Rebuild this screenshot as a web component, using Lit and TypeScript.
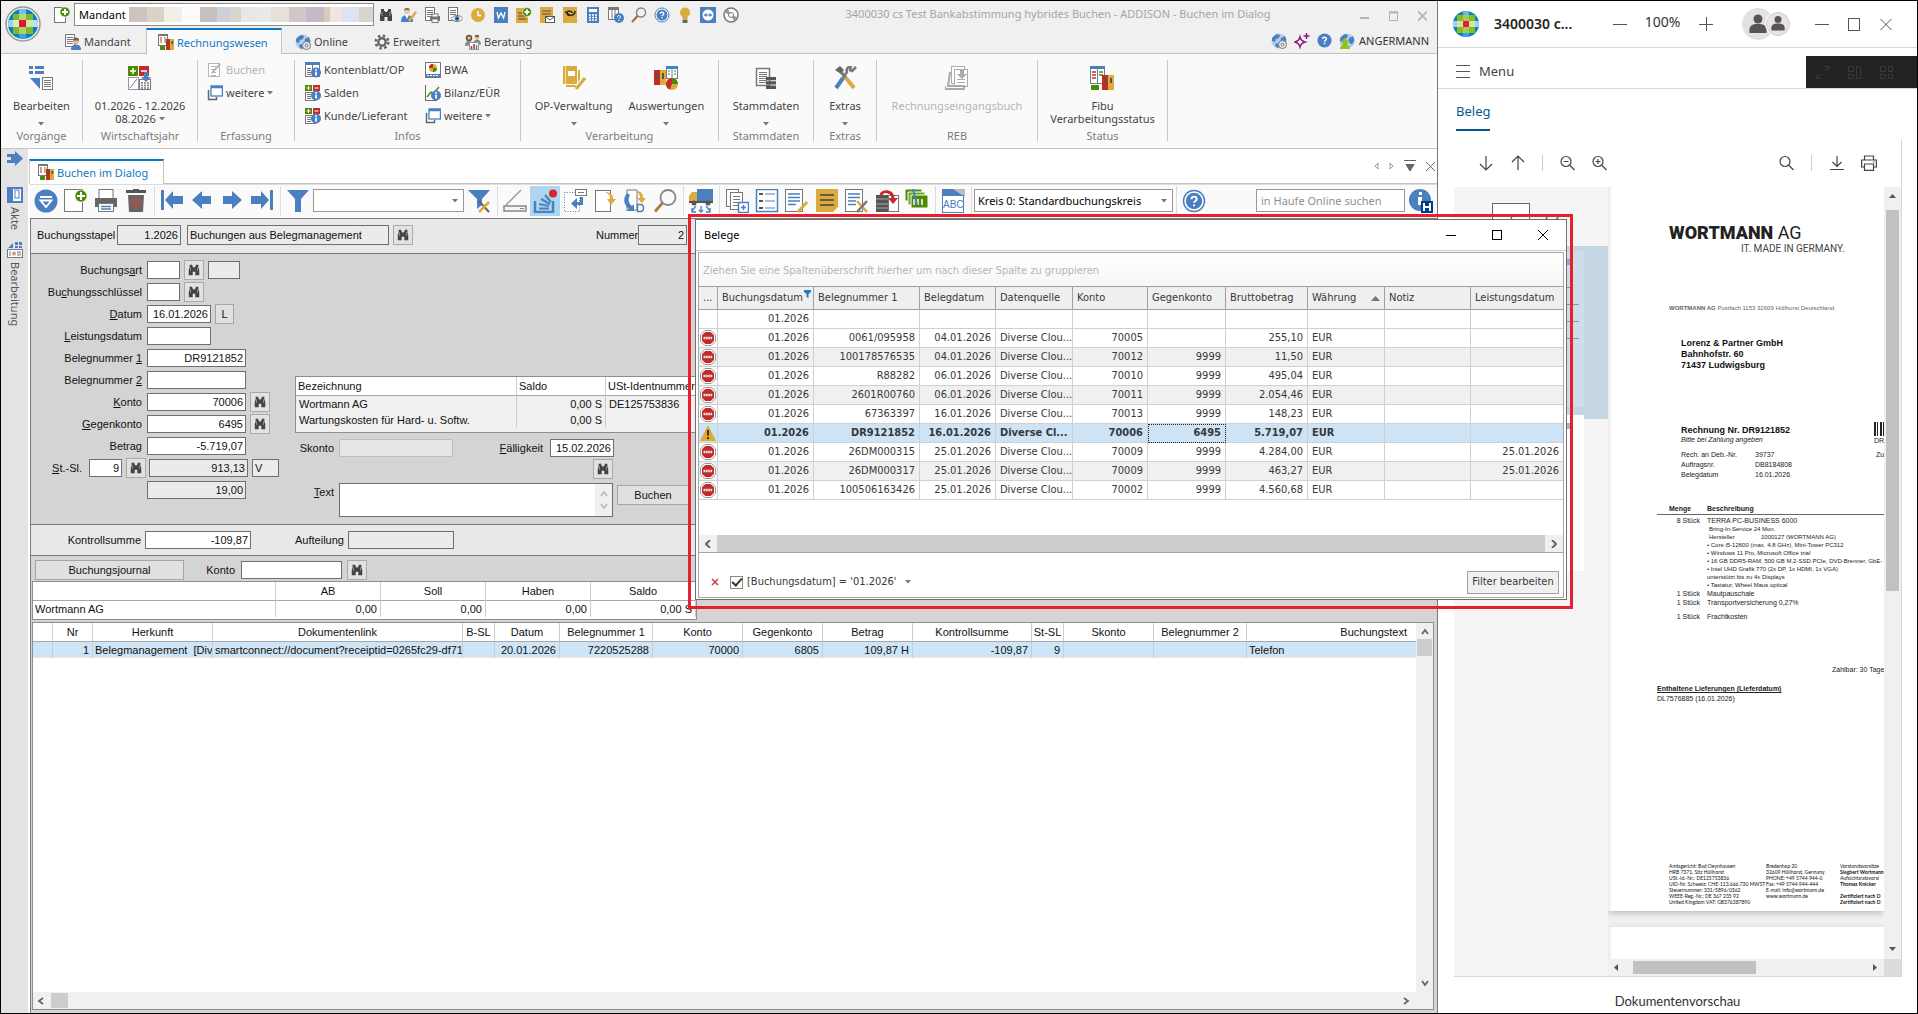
import { LitElement, html, svg, css, nothing, TemplateResult } from "lit";
import { customElement, property } from "lit/decorators.js";
import { classMap } from "lit/directives/class-map.js";

/* ---------- icons ---------- */

const G = "#777";
const B = "#4a80c0";
const Y = "#dcab3e";
const R = "#c22b28";
const N = "#4c8a05";

const tick = (x: number, y: number, w: number, c = G) => svg`<rect x=${x} y=${y} width=${w} height="1" fill=${c} />`;
const lines = (x: number, y: number, w: number, n: number, step = 2, c = G) =>
  Array.from({ length: n }, (_, i) => tick(x, y + i * step, w, c));
const page = (x = 2.5, y = 0.5, w = 11, h = 15) =>
  svg`<rect x=${x} y=${y} width=${w} height=${h} fill="#fff" stroke=${G} />`;
const plusBadge = (cx: number, cy: number, r = 4.5) => svg`
  <circle cx=${cx} cy=${cy} r=${r} fill=${N} stroke="#fff" stroke-width="0.6" />
  <path d="M${cx - r + 2} ${cy}h${2 * r - 4}M${cx} ${cy - r + 2}v${2 * r - 4}" stroke="#fff" stroke-width="2" />`;
const infoBadge = svg`
  <circle cx="11" cy="10.5" r="5" fill=${B} />
  <rect x="10.2" y="7" width="1.7" height="1.7" fill="#fff" /><rect x="10.2" y="9.6" width="1.7" height="4" fill="#fff" />`;
const globe = svg`
  <circle cx="8" cy="8" r="7.5" fill="#b4cdec" />
  <path d="M3 3l3-2 3 1-1 3-3 1-1 3-3-1 0-3zM10 5l4-2 1.500 4-2 4-2 0-2-3zM5 10l3 1 0 3-2 1-2-3z" fill="#4a80c0" />`;
const ledger = svg`
  <rect x="0.500" y="0.500" width="9" height="11" fill="#fff" stroke=${G} />
  <path d="M0 1h10" stroke=${G} stroke-width="2" />
  <path d="M2 4h2M2 6h2M2 8h2" stroke=${R} /><path d="M6 4h2M6 6h2M6 8h2" stroke=${N} />
  <rect x="8" y="5" width="4" height="11" fill=${R} /><rect x="12" y="5" width="4" height="11" fill=${Y} />
  <path d="M9.500 7h1.500v3h-1.500zM13.500 7h1.500v3h-1.500z" fill="#553" />
  <rect x="2" y="12" width="5" height="4" fill=${N} />`;
const grid4 = svg`
  <rect x="0" y="0" width="7" height="6" fill=${N} /><rect x="8" y="0" width="7" height="6" fill=${R} />
  <path d="M1.500 3h4M3.500 1v4M9.500 3h4" stroke="#fff" />`;

const ICONS: Record<string, { vb: number; body: unknown }> = {
  logo: {
    vb: 36,
    body: svg`
      <defs><clipPath id="lc"><circle cx="18" cy="18" r="15" /></clipPath></defs>
      <circle cx="18" cy="18" r="17" fill="#eee" stroke="#999" stroke-width="1.500" />
      <g clip-path="url(#lc)">
        <rect width="36" height="36" fill="#0a7fc6" />
        <rect x="8" y="8" width="20" height="20" fill="#7db928" />
        <rect x="14" y="2" width="7" height="6" fill="#7cc0ea" /><rect x="14" y="28" width="7" height="6" fill="#3d9fdb" />
        <rect x="2" y="14" width="6" height="7" fill="#9ed0ee" /><rect x="28" y="14" width="6" height="7" fill="#bfe0f4" />
        <rect x="14" y="8" width="7" height="6" fill="#b4d97a" /><rect x="14" y="21" width="7" height="7" fill="#a8d367" />
        <rect x="8" y="14" width="6" height="7" fill="#d9edbb" /><rect x="21" y="14" width="7" height="7" fill="#d0e8ab" />
        <rect x="14" y="14" width="7" height="7" fill="#e3152b" />
      </g>`,
  },
  logoFlat: {
    vb: 26,
    body: svg`
      <defs><clipPath id="lf"><circle cx="13" cy="13" r="13" /></clipPath></defs>
      <g clip-path="url(#lf)">
        <rect width="26" height="26" fill="#0a7fc6" />
        <rect x="4" y="4" width="18" height="18" fill="#85bc20" />
        <rect x="10" y="0" width="6" height="4" fill="#6ab6e4" /><rect x="10" y="22" width="6" height="4" fill="#3d9fdb" />
        <rect x="0" y="10" width="4" height="6" fill="#a5d3ef" /><rect x="22" y="10" width="4" height="6" fill="#a5d3ef" />
        <rect x="10" y="4" width="6" height="6" fill="#a3cc55" /><rect x="10" y="16" width="6" height="6" fill="#a3cc55" />
        <rect x="4" y="10" width="6" height="6" fill="#cfe6a5" /><rect x="16" y="10" width="6" height="6" fill="#cfe6a5" />
        <rect x="10" y="10" width="6" height="6" fill="#e5202e" />
      </g>`,
  },
  newDoc: { vb: 16, body: svg`${page(0.5, 0.5, 11, 15)}${plusBadge(11, 5, 5)}` },
  bino: {
    vb: 16,
    body: svg`<path d="M3 2h3v2h1v1h2V4h1V2h3v3l1 3v6H9.500v-4h-3v4H2V8l1-3z" fill="#444" /><path d="M4 5v4M12 5v4" stroke="#999" />`,
  },
  personPencil: {
    vb: 16,
    body: svg`<circle cx="6" cy="4" r="3" fill="#e8c9a0" /><path d="M3 4a3 3 0 0 1 6 0l-1-1H4z" fill="#86664a" /><path d="M0 15c0-5 2-7 6-7s6 2 6 7z" fill=${B} /><path d="M4 8l2 4 2-4z" fill="#fff" /><path d="M8 14l7-9" stroke=${Y} stroke-width="2.500" />`,
  },
  docPrint: {
    vb: 16,
    body: svg`${page(1.5, 0.5, 9, 13)}${lines(3, 3, 6, 4)}<rect x="6" y="9" width="10" height="5" fill=${G} /><rect x="8" y="7" width="6" height="3" fill="#fff" stroke=${G} /><rect x="8" y="12" width="6" height="3.500" fill="#fff" stroke=${G} />`,
  },
  docEye: {
    vb: 16,
    body: svg`${page(1.5, 0.5, 9, 13)}${lines(3, 3, 6, 3)}<path d="M4 11.500c3-4 9-4 12 0-3 4-9 4-12 0z" fill="#fff" stroke=${G} /><circle cx="10" cy="11.500" r="2.500" fill=${B} /><circle cx="10" cy="11.500" r="1" fill="#222" />`,
  },
  clock: { vb: 16, body: svg`<circle cx="8" cy="8" r="7" fill=${Y} /><path d="M8 4v4.500h3" fill="none" stroke="#fff" stroke-width="1.500" />` },
  word: { vb: 16, body: svg`<rect x="1" y="0" width="14" height="16" fill=${B} /><path d="M4 5l1.500 6L8 6l2.500 5L12 5" fill="none" stroke="#fff" stroke-width="1.300" />` },
  noteAdd: { vb: 16, body: svg`<path d="M0 1h12v15H0z" fill=${Y} /><path d="M2 6h5M2 9h8M2 12h8" stroke="#444" />${plusBadge(11, 5, 4.5)}` },
  noteMail: { vb: 16, body: svg`<path d="M1 0h13v16H1z" fill=${Y} /><path d="M3 4h9M3 7h9" stroke="#555" /><rect x="6.500" y="9.500" width="9" height="6" fill="#fff" stroke="#555" /><path d="M7 10l4 3 4-3" fill="none" stroke="#555" />` },
  post: { vb: 16, body: svg`<rect x="1" y="0" width="14" height="16" fill=${Y} /><path d="M3 5c2 0 3 3 5 3M13 4c0 5-8 6-8 2 0-3 5-2 5 0" fill="none" stroke="#222" stroke-width="1.500" />` },
  calc: { vb: 16, body: svg`<rect x="2" y="0" width="12" height="16" fill=${B} /><rect x="4" y="2" width="8" height="3" fill="#fff" /><path d="M4 8h8M4 10.500h8M4 13h8" stroke="#fff" stroke-width="1.500" stroke-dasharray="2 1" />` },
  tableHelp: { vb: 16, body: svg`<rect x="0.500" y="0.500" width="10" height="12" fill="#fff" stroke=${G} /><path d="M0 2h11" stroke=${G} stroke-width="2" /><path d="M4 1v12M7 1v12" stroke=${G} /><circle cx="11" cy="11" r="5" fill=${B} /><path d="M9.500 10c0-2 3-2 3 0 0 1-1.500 1-1.500 2.200M11 13v1" fill="none" stroke="#fff" />` },
  lens: { vb: 16, body: svg`<circle cx="10" cy="5.500" r="4.500" fill="#f4f4f4" stroke="#888" stroke-width="1.500" /><path d="M6.500 9L1 15" stroke="#a06a3c" stroke-width="2" />` },
  help: { vb: 16, body: svg`<circle cx="8" cy="8" r="7" fill="#fff" stroke=${B} /><circle cx="8" cy="8" r="5.500" fill=${B} /><path d="M6.300 6.800c0-2.300 3.500-2.300 3.500 0 0 1.200-1.700 1.200-1.700 2.400M8 10.300v1.200" fill="none" stroke="#fff" stroke-width="1.300" />` },
  helpSolid: { vb: 16, body: svg`<circle cx="8" cy="8" r="7.500" fill=${B} /><path d="M6 6.500c0-2.600 4-2.600 4 0 0 1.400-2 1.400-2 2.800M8 10.500V12" fill="none" stroke="#fff" stroke-width="1.500" />` },
  bulb: { vb: 16, body: svg`<circle cx="8" cy="5.500" r="5" fill=${Y} /><rect x="5.500" y="9" width="5" height="3" fill=${Y} /><rect x="5.500" y="12.500" width="5" height="3.500" fill="#666" />` },
  remote: { vb: 16, body: svg`<rect width="16" height="16" fill=${B} /><circle cx="8" cy="8" r="5.500" fill="#fff" /><path d="M3.500 8l3-2v1.500h3V6l3 2-3 2V8.500h-3V10z" fill=${B} />` },
  disc: { vb: 16, body: svg`<circle cx="8" cy="8" r="7" fill="#fff" stroke=${G} stroke-width="1.500" /><path d="M8 8L2 6a6 6 0 0 1 3-4zM8 8l6 2a6 6 0 0 1-3 4z" fill="#999" /><circle cx="8" cy="8" r="2.500" fill="#fff" stroke=${G} />` },
  docPerson: { vb: 16, body: svg`${page(0.5, 0.5, 9, 12)}${lines(2, 3, 6, 4)}<circle cx="11" cy="7" r="3" fill="#dcb98c" /><path d="M8 6.500a3 3 0 0 1 6 0z" fill="#7a6048" /><path d="M6 16c0-4 2-5.500 5-5.500s5 1.500 5 5.500z" fill=${B} />` },
  ledger: { vb: 16, body: ledger },
  globeAt: { vb: 16, body: svg`${globe}<circle cx="11.500" cy="11.500" r="4" fill="#eee" stroke="#777" /><circle cx="11.500" cy="11.500" r="1.500" fill="none" stroke="#777" />` },
  globeUser: { vb: 16, body: svg`${globe}<circle cx="6" cy="9" r="3" fill="#8fc31f" /><path d="M1 16c0-3 2-4.500 5-4.500s5 1.500 5 4.500z" fill="#8fc31f" />` },
  gear: { vb: 16, body: svg`<circle cx="8" cy="8" r="6.300" fill="none" stroke="#666" stroke-width="2.600" stroke-dasharray="2.500 2.450" /><circle cx="8" cy="8" r="3.700" fill="none" stroke="#666" stroke-width="2.400" />` },
  advice: { vb: 16, body: svg`<circle cx="4" cy="4" r="2.500" fill="#dcb98c" stroke="#6b5140" stroke-width="1.500" /><circle cx="12" cy="3" r="2.300" fill="#dcb98c" /><path d="M9.700 3a2.300 2.300 0 0 1 4.600 0z" fill="#7a6048" /><path d="M0 12c0-4 2-5 4-5s3 1 4 2c1-2 2-3.500 4-3.500s4 1.500 4 5z" fill="#888" /><rect x="4.500" y="8.500" width="9" height="7" fill="#fff" stroke="#999" /><path d="M6.500 15v-3M9 15v-5" stroke=${R} stroke-width="1.500" /><path d="M11.500 15v-4" stroke=${B} stroke-width="1.500" />` },
  spark: { vb: 16, body: svg`<path d="M6 4c.8 3 2 4.200 5 5-3 .8-4.200 2-5 5-.8-3-2-4.200-5-5 3-.8 4.200-2 5-5z" fill="none" stroke="#8a1a7a" stroke-width="1.500" /><path d="M12.500 0v6M9.500 3h6" stroke="#8a1a7a" stroke-width="1.500" />` },
  edit: { vb: 24, body: svg`<path d="M0 1.500h4M0 6.500h4M6 1.500h9M6 6.500h9" stroke=${B} stroke-width="3" /><path d="M1 12h10v11z" fill=${B} /><rect x="13.500" y="11.500" width="10" height="12" fill="#fff" stroke=${G} />${lines(15, 14, 7, 4)}` },
  fiscal: { vb: 24, body: svg`<rect x="0" y="0" width="10" height="10" fill=${N} /><rect x="11" y="0" width="10" height="10" fill=${R} /><path d="M2 5h6M5 2v6M13 5h6" stroke="#fff" stroke-width="1.500" /><rect x="0.500" y="11.500" width="10" height="12" fill="#fff" stroke="#999" /><path d="M2 22l7-9" stroke=${B} /><rect x="11.500" y="13.500" width="11" height="10" fill="#fff" stroke=${G} /><path d="M13 17h8M13 19.500h8M13 22h8" stroke=${G} stroke-width="1.500" stroke-dasharray="2 1" /><path d="M16 6h4v5h3l-5 5-5-5h3z" fill=${B} />` },
  writeOff: { vb: 16, body: svg`<rect x="1.500" y="1.500" width="11" height="13" fill="#fff" stroke="#b5b5b5" />${lines(4, 4, 5, 4, 3, "#b5b5b5")}<path d="M5 11l8-9" stroke="#b5b5b5" stroke-width="2" />` },
  windows: { vb: 16, body: svg`<path d="M1.500 5v9.500h8V12" fill="none" stroke="#666" stroke-width="1.500" /><rect x="4" y="1" width="11.400" height="10" fill="#fff" stroke=${B} stroke-width="1.300" /><path d="M4 2h12" stroke=${B} stroke-width="2.500" />` },
  acct: { vb: 16, body: svg`<rect x="0.500" y="0.500" width="14" height="14" fill="#fff" stroke=${G} /><path d="M0 1.500h15" stroke=${B} stroke-width="3" /><path d="M7.500 0v15" stroke=${G} />${lines(2, 6, 4, 4)}${infoBadge}` },
  saldo: { vb: 16, body: svg`${grid4}<rect x="0.500" y="7.500" width="10" height="8" fill="#fff" stroke=${G} />${lines(2, 9, 4, 3)}${infoBadge}` },
  bwa: { vb: 16, body: svg`<rect x="0.500" y="0.500" width="15" height="15" fill="#fff" stroke=${G} /><path d="M1 12h14v3H1z" fill=${B} /><path d="M2 13.500h12" stroke="#fff" stroke-dasharray="2 1" /><circle cx="8" cy="6" r="4" fill=${Y} /><path d="M8 6V2a4 4 0 0 0-4 4z" fill=${R} /><path d="M8 6h4a4 4 0 0 1-4 4z" fill=${N} />` },
  bilanz: { vb: 16, body: svg`<path d="M0.500 0v15.500H12" fill="none" stroke="#666" /><path d="M2 12l4-5 2 2 6-7" fill="none" stroke=${N} stroke-width="1.500" />${infoBadge}` },
  op: { vb: 24, body: svg`<path d="M1 0h14v18H1z" fill=${Y} /><path d="M3.500 0v18" stroke="#f4dc9c" /><path d="M4 20h13V4" fill="none" stroke=${Y} stroke-width="2" /><rect x="6" y="5" width="7" height="5" fill="#fff" /><path d="M15 21l8-9" stroke="#fafafa" stroke-width="5" /><path d="M14 23l9-11" stroke=${Y} stroke-width="3" />` },
  reports: { vb: 24, body: svg`<rect x="0" y="4" width="6" height="15" fill=${R} /><rect x="6" y="4" width="6" height="15" fill=${Y} /><path d="M2 7h2v6H2zM8 7h2v6H8z" fill="#554" /><rect x="12.500" y="0.500" width="11" height="12" fill="#fff" stroke=${G} /><path d="M12 1.500h12" stroke=${B} stroke-width="3" /><path d="M18 0v12" stroke=${B} /><path d="M14 5h2M14 8h2M20 5h2M20 8h2" stroke=${N} /><circle cx="18" cy="18" r="6" fill=${Y} /><path d="M18 18v-6a6 6 0 0 1 6 6z" fill=${N} /><path d="M18 18h-6a6 6 0 0 0 4 5.600z" fill=${R} /><path d="M18 18v-6a6 6 0 0 0-6 6z" fill=${R} />` },
  master: { vb: 24, body: svg`<rect x="2.500" y="2.500" width="13" height="17" fill="#fff" stroke=${G} stroke-width="1.500" />${lines(5, 6, 8, 6)}<path d="M12 11h10v3.300H12zM12 15.300h10v3.300H12zM12 19.600h10V23H12z" fill="#555" />` },
  tools: { vb: 24, body: svg`<path d="M2 4l5-4 4 4-3 4z" fill="#666" /><path d="M8 6l5 6" stroke="#777" stroke-width="3" /><path d="M13 12l8 10" stroke=${Y} stroke-width="4" /><path d="M23 1l-4 4-2-1 1-4c-4 1-5 4-4 6l-4 6" fill="none" stroke="#777" stroke-width="2.500" /><path d="M10 12L3 22" stroke=${B} stroke-width="4" />` },
  inbox: { vb: 24, body: svg`<rect x="6.500" y="0.500" width="13" height="17" fill="#fff" stroke="#aaa" /><rect x="9.500" y="3.500" width="13" height="17" fill="#fff" stroke="#aaa" />${lines(12, 13, 8, 3, 3, "#aaa")}<path d="M15 3h4v5h3l-5 5-5-5h3z" fill="#aaa" /><path d="M5 6L3 20h16v3H0v-3" fill="none" stroke="#aaa" stroke-width="2" />` },
  status: { vb: 24, body: svg`<rect x="0.500" y="0.500" width="14" height="17" fill="#fff" stroke=${G} /><path d="M0 1.500h15" stroke=${B} stroke-width="3" /><path d="M7.500 0v17" stroke=${B} /><path d="M2 6h4M2 9h4M2 12h4" stroke=${R} stroke-width="1.500" /><path d="M9 6h4M9 9h4" stroke=${N} stroke-width="1.500" /><rect x="12" y="9" width="6" height="15" fill=${R} /><rect x="18" y="9" width="6" height="15" fill=${Y} /><path d="M14 12h2v5h-2zM20 12h2v5h-2z" fill="#554" /><rect x="1" y="19" width="8" height="5" fill=${N} />` },
  collapse: { vb: 24, body: svg`<circle cx="12" cy="12" r="11.500" fill=${B} /><path d="M6 8h12" stroke="#fff" stroke-width="2" /><path d="M6.500 11.500h11L12 18z" fill=${B} stroke="#fff" stroke-width="1.800" />` },
  newDocL: { vb: 24, body: svg`<rect x="0.500" y="0.500" width="18" height="22" fill="#fff" stroke=${G} />${plusBadge(17, 7, 6)}` },
  printL: { vb: 24, body: svg`<rect x="5" y="0.500" width="14" height="9" fill="#fff" stroke=${G} /><rect x="1" y="9" width="22" height="9" fill="#666" /><rect x="4.500" y="14.500" width="15" height="8" fill="#fff" stroke=${G} /><path d="M7 17.500h10M7 20h10" stroke=${B} stroke-width="1.500" />` },
  trash: { vb: 24, body: svg`<path d="M2 2.500h20M9 1h6" stroke="#555" stroke-width="3" /><path d="M4 6h16l-1 17H5z" fill="#666" /><path d="M8.500 9v10M12 9v10M15.500 9v10" stroke="#c54a40" stroke-width="1.500" />` },
  first: { vb: 24, body: svg`<path d="M2.500 1v20" stroke=${B} stroke-width="3" /><path d="M5 11l8-9v5h10v8H13v5z" fill=${B} />` },
  prev: { vb: 24, body: svg`<path d="M2 11l10-9v5h9v8h-9v5z" fill=${B} />` },
  next: { vb: 24, body: svg`<path d="M22 11L12 2v5H3v8h9v5z" fill=${B} />` },
  last: { vb: 24, body: svg`<path d="M21.500 1v20" stroke=${B} stroke-width="3" /><path d="M19 11l-8-9v5H1v8h10v5z" fill=${B} />` },
  funnel: { vb: 24, body: svg`<path d="M1 1h22l-8 9v13H9V10z" fill=${B} />` },
  funnelTools: { vb: 24, body: svg`<path d="M1 1h22l-8 9v6l-5 4V10z" fill=${B} /><path d="M12 12l10 11" stroke="#666" stroke-width="2" /><path d="M22 13L12 23" stroke=${Y} stroke-width="2.500" />` },
  scanner: { vb: 24, body: svg`<path d="M18 1L3 16" stroke="#999" stroke-width="1.500" /><path d="M1 17h22v5H1z" fill="#f5f5f5" stroke="#888" stroke-width="1.500" /><path d="M17 19.500h4" stroke="#888" />` },
  stack: { vb: 24, body: svg`<path d="M2 12v11h18V12" fill="none" stroke=${B} stroke-width="2.500" /><path d="M6 19.500h10M6 15l10 2M8 10l9 5M12 6l6 7" stroke=${B} stroke-width="2.200" /><circle cx="20" cy="4.500" r="4" fill="#d8232a" />` },
  attach: { vb: 24, body: svg`<rect x="1.500" y="3.500" width="15" height="19" fill="#fff" stroke=${B} stroke-dasharray="1 1.500" /><rect x="12.500" y="0.500" width="11" height="6" fill="#fff" stroke=${G} />${tick(15, 3, 6)}<path d="M20 8v8h-6v4l-6-5.500 6-5.500v4h3V8z" fill=${B} />` },
  pageArrow: { vb: 24, body: svg`<rect x="2.500" y="1.500" width="15" height="21" fill="#fff" stroke=${G} /><path d="M12 3c5 0 8 2 8 7h3l-5 6-4-6h3c0-4-1-5-5-7z" fill=${Y} />` },
  pageLoop: { vb: 24, body: svg`<path d="M4 1h10v20H4z" fill="#fff" stroke=${G} /><path d="M4 4c-4 5-4 11 2 16l-3 2h8v-7l-2 2c-4-3-4-7-2-11z" fill=${B} /><path d="M13 2c6 0 7 3 7 7h3l-4 5-5-5h3c0-3-1-5-4-7z" fill=${Y} /><path d="M14.500 15.500h3c4 0 4 7 0 7h-3z" fill="#fff" stroke=${B} stroke-width="1.500" />` },
  lensL: { vb: 24, body: svg`<circle cx="15" cy="8.500" r="7.500" fill="#fafafa" stroke="#888" stroke-width="1.800" /><path d="M9.500 14L2 22.500" stroke="#b07a44" stroke-width="2.800" />` },
  truck: { vb: 24, body: svg`<rect x="8" y="0" width="16" height="12" fill=${B} /><path d="M0 12V7l3-4h5v9z" fill=${Y} /><path d="M0 12h24v2H0z" fill="#555" /><circle cx="5" cy="14" r="2.500" fill="#555" /><circle cx="19" cy="14" r="2.500" fill="#555" /><path d="M7 17l-4 5M3 19v4h4M12 17v6M10 21l2 2 2-2M17 17l4 5M21 19v4h-4" fill="none" stroke=${B} stroke-width="1.300" />` },
  copyAdd: { vb: 24, body: svg`<rect x="1.500" y="0.500" width="12" height="17" fill="#fff" stroke=${G} /><rect x="5.500" y="3.500" width="12" height="17" fill="#fff" stroke=${G} />${lines(8, 7, 7, 4, 3)}<rect x="13.500" y="13.500" width="10" height="10" fill="#fff" stroke=${B} stroke-width="1.500" /><path d="M16 18.500h5M18.500 16v5" stroke=${B} stroke-width="1.500" />` },
  checklist: { vb: 24, body: svg`<rect x="1.500" y="0.500" width="21" height="22" fill="#fff" stroke=${B} stroke-width="1.500" /><path d="M4 5h4M4 12h4M4 19h4" stroke="#555" stroke-width="2" /><path d="M10 5h10M10 12h10M10 19h10" stroke=${B} />` },
  listPen: { vb: 24, body: svg`<rect x="0.500" y="0.500" width="17" height="22" fill="#fff" stroke=${G} /><path d="M3 5h12M3 8.500h12M3 12h12M3 15.500h8" stroke=${B} stroke-width="1.500" /><path d="M13 23l9-10" stroke=${Y} stroke-width="3" />` },
  note: { vb: 24, body: svg`<path d="M1 0h22v18l-5 5H1z" fill=${Y} /><path d="M5 6h14M5 11h14M5 16h14" stroke="#444" stroke-width="1.500" />` },
  listTools: { vb: 24, body: svg`<rect x="0.500" y="0.500" width="17" height="22" fill="#fff" stroke=${G} /><path d="M3 5h12M3 8.500h12M3 12h8M3 15.500h8" stroke=${B} stroke-width="1.500" /><path d="M12 12l10 11" stroke=${Y} stroke-width="2.500" /><path d="M22 12L12 23" stroke="#777" stroke-width="2.500" />` },
  drumCopy: { vb: 24, body: svg`<path d="M1 6h13v17H1z" fill="#555" /><path d="M1 10h13M1 15h13M1 19h13" stroke="#aaa" /><rect x="13.500" y="6.500" width="10" height="16" fill="#fff" stroke=${G} /><path d="M6 6c1-5 12-5 12 4" fill="none" stroke=${R} stroke-width="3" /><path d="M13 9h10l-5 6z" fill=${R} />` },
  cards: { vb: 24, body: svg`<path d="M0 0h17v12H0z" fill=${N} stroke="#fff" /><path d="M3 3h17v13H3z" fill="#6aa52a" stroke="#fff" /><path d="M6 6h17v13H6z" fill=${N} stroke="#fff" /><path d="M9 10v6M13 10v6M17 10v6" stroke="#fff" stroke-width="1.500" /><path d="M8 0l4 16" stroke=${B} stroke-width="2" />` },
  abc: { vb: 24, body: svg`<path d="M1 0h14l8 7H1z" fill=${B} /><path d="M12 0l12 0v8z" fill="#bbb" /><rect x="1.500" y="6.500" width="21" height="17" fill="#fff" stroke=${B} /><text x="2" y="19" font-size="10" font-family="Liberation Sans" fill=${B}>ABC</text>` },
  haufe: { vb: 24, body: svg`<circle cx="11" cy="11" r="11" fill=${B} /><path d="M10 3h3v3h-3zM9 8h4v8H9z" fill="#fff" /><rect x="12" y="12" width="12" height="12" fill="#003f87" /><path d="M15 14v8M21 14v8M15 18h6" stroke="#fff" stroke-width="2" />` },
  enter: { vb: 16, body: svg`<path d="M0 3h8V0l8 7.500L8 15v-3H0V9h4V6H0z" fill=${B} />` },
  book: { vb: 16, body: svg`<path d="M1 1h14v14H1z" fill="#fff" stroke=${B} stroke-width="2" /><path d="M1 0h5v16H1z" fill=${B} /><rect x="8" y="3" width="4" height="8" fill="#fff" stroke=${B} />` },
  worksheet: { vb: 16, body: svg`<path d="M8 0h3v3H8zM12 0h3v3h-3zM8 4h3v2H8zM12 4h3v2h-3zM1 6l5-5v5z" fill=${B} /><rect x="0.500" y="7.500" width="15" height="8" fill="#fff" stroke=${G} /><path d="M3 9v5" stroke=${B} /><circle cx="7" cy="11.500" r="2" fill="#c98" /><path d="M11 9v5M13 9v5" stroke=${G} />` },
  stop: { vb: 16, body: svg`<path d="M4.800 0.500h6.400l4.300 4.300v6.400l-4.300 4.300H4.800L.5 11.200V4.800z" fill="#fff" stroke="#999" /><path d="M5.300 2h5.400L14 5.300v5.400L10.700 14H5.300L2 10.700V5.300z" fill="#bf2b2b" /><path d="M3.500 8h9" stroke="#f6dede" stroke-width="2.500" stroke-dasharray="1.800 0.500" />` },
  warn: { vb: 16, body: svg`<path d="M8 0l8 16H0z" fill="#dfa92f" /><path d="M8 5v5.500M8 12v2" stroke="#333" stroke-width="2" />` },
};

const icon = (name: string, size?: number) => {
  const i = ICONS[name];
  return html`<svg class="ic" aria-hidden="true" width=${size ?? i.vb} height=${size ?? i.vb} viewBox="0 0 ${i.vb} ${i.vb}">${i.body}</svg>`;
};

/* ---------- shared styles ---------- */

const base = css`
  * { box-sizing: border-box; }
  .ic { display: block; flex: none; }
  button { font: inherit; color: inherit; background: none; border: 0; padding: 0; margin: 0; }
  input, textarea, select { font: inherit; color: inherit; margin: 0; border-radius: 0; outline: 0; min-width: 0; }
  table { border-collapse: separate; border-spacing: 0; table-layout: fixed; width: 100%; }
  th, td { overflow: hidden; white-space: nowrap; font-weight: normal; }
  a { color: inherit; text-decoration: none; }
`;

/* ---------- receipts dialog ---------- */

type Receipt = { warn?: boolean; cells: string[] };

const RECEIPTS: Receipt[] = [
  { cells: ["01.2026", "0061/095958", "04.01.2026", "Diverse Clou...", "70005", "", "255,10", "EUR", "", ""] },
  { cells: ["01.2026", "100178576535", "04.01.2026", "Diverse Clou...", "70012", "9999", "11,50", "EUR", "", ""] },
  { cells: ["01.2026", "R88282", "06.01.2026", "Diverse Clou...", "70010", "9999", "495,04", "EUR", "", ""] },
  { cells: ["01.2026", "2601R00760", "06.01.2026", "Diverse Clou...", "70011", "9999", "2.054,46", "EUR", "", ""] },
  { cells: ["01.2026", "67363397", "16.01.2026", "Diverse Clou...", "70013", "9999", "148,23", "EUR", "", ""] },
  { warn: true, cells: ["01.2026", "DR9121852", "16.01.2026", "Diverse Cl...", "70006", "6495", "5.719,07", "EUR", "", ""] },
  { cells: ["01.2026", "26DM000315", "25.01.2026", "Diverse Clou...", "70009", "9999", "4.284,00", "EUR", "", "25.01.2026"] },
  { cells: ["01.2026", "26DM000317", "25.01.2026", "Diverse Clou...", "70009", "9999", "463,27", "EUR", "", "25.01.2026"] },
  { cells: ["01.2026", "100506163426", "25.01.2026", "Diverse Clou...", "70002", "9999", "4.560,68", "EUR", "", ""] },
];
const RECEIPT_COLS = ["Buchungsdatum", "Belegnummer 1", "Belegdatum", "Datenquelle", "Konto", "Gegenkonto", "Bruttobetrag", "Währung", "Notiz", "Leistungsdatum"];
const RECEIPT_WIDTHS = [19, 96, 106, 76, 77, 75, 78, 82, 77, 86, 93];
const LEFT_COLS = new Set([3, 7, 8]);

@customElement("receipts-dialog")
export class ReceiptsDialog extends LitElement {
  static styles = [
    base,
    css`
      :host { display: block; border: 3px solid #e8202e; padding: 2px 3px 6px 4px; font: 11px/14px "DejaVu Sans Condensed", "Liberation Sans", sans-serif; color: #383838; }
      .win { height: 100%; display: flex; flex-direction: column; background: #fff; border: 1px solid #6e6e6e; }
      .title { display: flex; align-items: center; height: 31px; padding-left: 8px; font: 11px/16px "Noto Sans", sans-serif; color: #000; border-bottom: 1px solid #c8c8c8; }
      .title span { flex: 1; }
      .wbtn { width: 46px; height: 30px; display: grid; place-items: center; }
      .panel { flex: 1; margin: 1px 2px; border: 1px solid #a6a6a6; display: flex; flex-direction: column; min-height: 0; }
      .group { height: 33px; padding: 11px 4px 0; color: #b5b5b5; background: linear-gradient(#fff, #f6f6f6); white-space: nowrap; line-height: 14px; }
      thead th { height: 24px; padding: 0 4px; text-align: left; background: #efefef; border-top: 1px solid #a0a0a0; border-bottom: 1px solid #a0a0a0; border-right: 1px solid #a0a0a0; }
      .hd { display: flex; align-items: center; justify-content: space-between; }
      .hd.filter { align-items: flex-start; }
      .hd.filter svg { margin: -1px -2px 0 0; }
      td { height: 19px; padding: 0 4px; border-right: 1px solid #d0d0d0; border-bottom: 1px solid #d0d0d0; text-align: right; line-height: 14px; }
      td.l { text-align: left; }
      td.st { padding: 0 1px; }
      th:last-child, td:last-child { border-right: 0; }
      tr.alt td { background: #f0f0f0; }
      tr.sel td { background: #cce4f6; font-weight: bold; }
      td.focus { outline: 1px dotted #222; outline-offset: -1px; }
      .space { flex: 1; }
      .hs { display: flex; height: 18px; background: #cdcdcd; border-bottom: 1px solid #a6a6a6; justify-content: space-between; flex: none; }
      .hs button { width: 18px; background: #f0f0f0; display: grid; place-items: center; }
      .foot { height: 44px; display: flex; align-items: center; padding: 14px 4px 0 12px; gap: 4px; flex: none; }
      .foot .x { width: 10px; height: 10px; margin-right: 5px; }
      .cb { display: flex; align-items: center; gap: 4px; flex: none; }
      .cb input { appearance: none; width: 13px; height: 13px; border: 1px solid #8a8a8a; background: #fff; display: grid; place-items: center; }
      .cb input:checked::after { content: ""; width: 8px; height: 4px; border-left: 2px solid #333; border-bottom: 2px solid #333; transform: translateY(-1px) rotate(-48deg); }
      .dd { margin-left: 4px; flex: none; }
      .edit { margin-left: auto; height: 23px; width: 92px; background: #f0f0f0; border: 1px solid #a0a0a0; white-space: nowrap; }
    `,
  ];

  render() {
    return html`
      <section class="win" role="dialog" aria-label="Belege">
        <header class="title">
          <span>Belege</span>
          <button class="wbtn" aria-label="Minimieren"><svg width="10" height="10"><path d="M0 5.500h10" stroke="#000" /></svg></button>
          <button class="wbtn" aria-label="Maximieren"><svg width="10" height="10"><rect x="0.500" y="0.500" width="9" height="9" fill="none" stroke="#000" /></svg></button>
          <button class="wbtn" aria-label="Schließen"><svg width="10" height="10"><path d="M0 0l10 10M10 0L0 10" stroke="#000" /></svg></button>
        </header>
        <div class="panel">
          <div class="group">Ziehen Sie eine Spaltenüberschrift hierher um nach dieser Spalte zu gruppieren</div>
          <table>
            <colgroup>${RECEIPT_WIDTHS.map((w, i) => html`<col style=${i === RECEIPT_WIDTHS.length - 1 ? "" : `width:${w}px`} />`)}</colgroup>
            <thead>
              <tr>
                <th scope="col">...</th>
                ${RECEIPT_COLS.map(
                  (c, i) => html`<th scope="col"><div class=${classMap({ hd: true, filter: i === 0 })}>${c}
                    ${i === 0 ? html`<svg width="7" height="8" viewBox="0 0 7 8"><path d="M0 0h7v2L4.500 4v4l-2-1V4L0 2z" fill="#1a7fc8" /></svg>` : nothing}
                    ${i === 7 ? html`<svg width="9" height="5"><path d="M0 5L4.500 0 9 5z" fill="#777" /></svg>` : nothing}</div></th>`
                )}
              </tr>
            </thead>
            <tbody>
              <tr><td></td><td>01.2026</td>${RECEIPT_COLS.slice(1).map(() => html`<td></td>`)}</tr>
              ${RECEIPTS.map(
                (r, n) => html`<tr class=${classMap({ alt: n % 2 === 1, sel: !!r.warn })}>
                  <td class="st">${icon(r.warn ? "warn" : "stop")}</td>
                  ${r.cells.map((c, i) => html`<td class=${classMap({ l: LEFT_COLS.has(i), focus: !!r.warn && i === 5 })}>${c}</td>`)}
                </tr>`
              )}
            </tbody>
          </table>
          <div class="space"></div>
          <div class="hs">
            <button aria-label="Nach links"><svg width="6" height="8"><path d="M5 0L1 4l4 4" fill="none" stroke="#666" stroke-width="2" /></svg></button>
            <button aria-label="Nach rechts"><svg width="6" height="8"><path d="M1 0l4 4-4 4" fill="none" stroke="#666" stroke-width="2" /></svg></button>
          </div>
          <footer class="foot">
            <button class="x" aria-label="Filter entfernen"><svg class="ic" width="8" height="8" viewBox="0 0 8 8"><path d="M1 1l6 6M7 1L1 7" stroke="#d03a48" stroke-width="1.500" /></svg></button>
            <label class="cb"><input type="checkbox" checked />[Buchungsdatum] = '01.2026'</label>
            <button class="dd" aria-label="Filterverlauf"><svg class="ic" width="6" height="4"><path d="M0 0h6L3 3.500z" fill="#777" /></svg></button>
            <button class="edit">Filter bearbeiten</button>
          </footer>
        </div>
      </section>
    `;
  }
}

/* ---------- document viewer ---------- */

@customElement("document-viewer")
export class DocumentViewer extends LitElement {
  static styles = [
    base,
    css`
      :host { display: flex; flex-direction: column; min-width: 0; min-height: 0; background: #fff; border-left: 1px solid #777; font: 13px/18px "Noto Sans", sans-serif; color: #333; }
      .top { height: 47px; flex: none; display: flex; align-items: center; border-bottom: 1px solid #d8d8d8; padding: 0 24px 0 15px; }
      .name { font-size: 14px; font-weight: 600; margin-left: 15px; color: #222; width: 119px; white-space: nowrap; }
      .pct { font-size: 14px; width: 37px; margin: 0 18px 4px 17px; text-align: center; }
      .people { margin-left: 28px; }
      .wins { margin-left: auto; display: flex; gap: 18px; }
      .menu { height: 41px; flex: none; display: flex; align-items: center; padding-left: 18px; border-bottom: 1px solid #d8d8d8; }
      .menu button { display: flex; align-items: center; gap: 9px; color: #444; padding-top: 6px; }
      .dark { margin: 8px 0 0 auto; height: 32px; width: 111px; background: #222; display: flex; align-items: center; padding-left: 9px; gap: 17px; }
      .tabs { height: 50px; flex: none; padding: 9px 18px 0; }
      .tabs a { display: inline-block; height: 33px; padding-top: 4px; border-bottom: 2px solid #005b92; color: #005b92; }
      .body { flex: 1; min-height: 0; margin: 0 15px 0 16px; border-right: 1px solid #d8d8d8; border-bottom: 1px solid #d8d8d8; display: flex; flex-direction: column; }
      .bar { height: 48px; flex: none; display: flex; align-items: center; padding: 0 24px; }
      .bar button { width: 16px; height: 16px; margin-right: 16px; }
      .bar .sep { width: 1px; height: 16px; background: #ccc; margin-right: 17px; }
      .bar .sp { flex: 1; }
      .bar button:last-child { margin-right: 0; }
      .panes { flex: 1; min-height: 0; display: grid; grid-template-columns: 154px minmax(0, 1fr) 17px; grid-template-rows: minmax(0, 1fr) 17px; }
      .thumbs { grid-row: 1 / 3; background: #f5f5f5; overflow: hidden; }
      .pager { display: flex; align-items: flex-start; gap: 14px; padding: 16px 0 0 38px; height: 59px; }
      .pager input { width: 38px; height: 30px; border: 1px solid #666; background: #fff; text-align: center; }
      .pager span { padding-top: 6px; }
      .th { height: 173px; padding: 5px 24px 12px; background: #c3d6e2; }
      .th.second { background: none; padding: 0 24px; margin-top: -4px; }
      .sheet { height: 156px; background: #cbdee9; display: flex; flex-direction: column; align-items: flex-end; padding: 8px 12px; }
      .second .sheet { background: #fff; }
      .mk { width: 18px; height: 6px; background: #8f86c4; opacity: 0.7; margin-bottom: 22px; }
      .ln { width: 24px; height: 1px; background: #8a949c; margin-bottom: 16px; }
      .ln.e { margin-right: -7px; }
      .view { overflow: hidden; background: #f0f0f0; color: #222; font: 7px/9px "Liberation Sans", sans-serif; white-space: nowrap; }
      .paper { height: 724px; background: #fff; padding: 37px 0 0 49px; box-shadow: 0 2px 6px #bbb, inset 4px 0 4px -3px #ddd; }
      .paper.next { height: 60px; margin-top: 16px; }
      .brand { font: 18px/18px "Roboto", sans-serif; margin-left: 12px; color: #222; }
      .brand b { font-weight: 900; }
      .slogan { font: 10px/12px "Roboto", sans-serif; margin: 0 0 0 84px; padding-top: 1px; color: #444; }
      .sender { margin: 49px 0 0 12px; font-size: 6px; color: #666; }
      .addr { margin: 25px 0 0 24px; font: bold 9px/11px "Liberation Sans", sans-serif; color: #111; }
      .inv { margin: 51px 0 0 24px; display: grid; grid-template-columns: minmax(0, 1fr) 10px; }
      .inv h2 { margin: 4px 0 0; font: bold 9px/9px "Liberation Sans", sans-serif; color: #111; }
      .code { height: 14px; background: repeating-linear-gradient(90deg, #222 0 2px, #fff 2px 3px, #222 3px 4px, #fff 4px 6px); }
      .meta { margin: 5px 0 0 24px; display: grid; grid-template-columns: 74px 121px 1fr; line-height: 10px; }
      .items { margin: 24px 0 0; display: grid; grid-template-columns: 43px 1fr; column-gap: 7px; }
      .items .q { text-align: right; }
      .items .h { font-weight: bold; padding-bottom: 1px; text-align: left; }
      .items .h.first { padding-left: 12px; }
      .rule { grid-column: 1 / 3; height: 1px; background: #666; margin-bottom: 1px; }
      .sub { grid-column: 2; font-size: 6px; line-height: 8px; }
      .sub.in { padding-left: 2px; }
      .mf { display: inline-block; width: 52px; }
      .gap { padding-top: 5px; }
      .pay { margin: 44px 0 0 175px; }
      .deliv { margin: 10px 0 0; font-weight: bold; text-decoration: underline; }
      .dl { margin-top: 1px; }
      .imprint { margin: 160px 0 0 12px; display: grid; grid-template-columns: 97px 74px 1fr; font: 5px/6px "Lato", sans-serif; color: #111; }
      .vs { background: #f0f0f0; display: flex; flex-direction: column; align-items: center; padding: 7px 0; }
      .vs i { width: 13px; flex: none; height: 381px; background: #c1c1c1; margin: 11px 0 auto; }
      .hs2 { background: #f0f0f0; display: flex; align-items: center; padding: 0 6px; }
      .hs2 i { width: 123px; height: 13px; background: #c1c1c1; margin: 0 auto 0 14px; }
      .corner { background: #dcdcdc; }
      .cap { height: 36px; flex: none; display: grid; place-items: center; padding-top: 12px; font: 13px/16px "Lato", sans-serif; }
    `,
  ];

  private line(d: string, w = 1.2): TemplateResult {
    return html`<svg class="ic" width="16" height="16" viewBox="0 0 16 16" fill="none" stroke="#444" stroke-width=${w}><path d=${d} /></svg>`;
  }

  render() {
    return html`
      <header class="top">
        ${icon("logoFlat")}
        <span class="name">3400030 c...</span>
        <button aria-label="Verkleinern"><svg class="ic" width="14" height="14"><path d="M0 7.500h14" stroke="#555" /></svg></button>
        <span class="pct">100%</span>
        <button aria-label="Vergrößern"><svg class="ic" width="14" height="14"><path d="M0 7.500h14M7.500 0v14" stroke="#555" /></svg></button>
        <svg class="ic people" width="50" height="34" viewBox="0 0 50 34">
          <circle cx="17" cy="17" r="16" fill="#e2e2e2" />
          <circle cx="17" cy="12" r="4.500" fill="#555" /><path d="M8.500 26c-1-8 3-9 8.500-9s9.500 1 8.500 9z" fill="#555" />
          <circle cx="37" cy="17" r="12" fill="#e6e2e6" stroke="#fff" stroke-width="1.500" />
          <circle cx="37" cy="17" r="11.500" fill="none" stroke="#d9c4d9" />
          <circle cx="37" cy="12.500" r="3.500" fill="#555" /><path d="M30.500 23.500c-1-6 2-7 6.500-7s7.500 1 6.500 7z" fill="#555" />
        </svg>
        <div class="wins">
          <button aria-label="Minimieren"><svg class="ic" width="14" height="14"><path d="M0 7.500h14" stroke="#555" /></svg></button>
          <button aria-label="Maximieren"><svg class="ic" width="14" height="14"><rect x="1.500" y="1.500" width="11" height="12" fill="none" stroke="#555" /></svg></button>
          <button aria-label="Schließen"><svg class="ic" width="14" height="14"><path d="M1.500 2l11 11M12.500 2l-11 11" stroke="#555" /></svg></button>
        </div>
      </header>
      <nav class="menu">
        <button><svg class="ic" width="14" height="13"><path d="M0 0.500h14M0 6.500h14M0 12.500h14" stroke="#555" /></svg>Menu</button>
        <div class="dark">
          <svg width="15" height="15" fill="none" stroke="#3a3a3a"><path d="M9 6l4-4M9.500 1.500h4v4M6 9l-4 4M1.500 9.500v4h4" /></svg>
          <svg width="15" height="15" fill="none" stroke="#3a3a3a"><path d="M1.500 1.500h5v5h-5zM1.500 9.500h5v4h-5zM9.500 1.500h4v12h-4z" /></svg>
          <svg width="15" height="15" fill="none" stroke="#3a3a3a"><path d="M1.500 1.500h5v5h-5zM1.500 9.500h5v4h-5zM9.500 1.500h4v5h-4zM9.500 9.500h4v4h-4z" /></svg>
        </div>
      </nav>
      <nav class="tabs"><a href="#beleg">Beleg</a></nav>
      <main class="body">
        <div class="bar">
          <button aria-label="Nächste Seite">${this.line("M8 1v14M2 9l6 6 6-6")}</button>
          <button aria-label="Vorherige Seite">${this.line("M8 15V1M2 7l6-6 6 6")}</button>
          <span class="sep"></span>
          <button aria-label="Verkleinern">${this.line("M11 6.500a5 5 0 1 1-10 0a5 5 0 1 1 10 0M9.500 10l5 5M3.500 6.500h5")}</button>
          <button aria-label="Vergrößern">${this.line("M11 6.500a5 5 0 1 1-10 0a5 5 0 1 1 10 0M9.500 10l5 5M3.500 6.500h5M6 4v5")}</button>
          <span class="sp"></span>
          <button aria-label="Suchen">${this.line("M11 6.500a5 5 0 1 1-10 0a5 5 0 1 1 10 0M9.500 10l5 5")}</button>
          <span class="sep"></span>
          <button aria-label="Herunterladen">${this.line("M8 1v10M3.500 7l4.500 4.500L12.500 7M1 14.500h14")}</button>
          <button aria-label="Drucken">${this.line("M3.500 5V1h9v4M3.500 12H.6V5h14.800v7h-2.900M3.500 9h9v6.400h-9zM12 7h1.500")}</button>
        </div>
        <div class="panes">
          <aside class="thumbs">
            <div class="pager"><input aria-label="Seite" value="1" /><span>/ 2</span></div>
            <div class="th"><div class="sheet"><div class="mk"></div><div class="ln"></div><div class="ln e"></div><div class="ln e"></div><div class="ln e"></div></div></div>
            <div class="th second"><div class="sheet"><div class="mk"></div></div></div>
          </aside>
          <article class="view">
            <div class="paper">
              <div class="brand"><b>WORTMANN</b> AG</div>
              <div class="slogan">IT. MADE IN GERMANY.</div>
              <div class="sender"><b>WORTMANN AG</b> Postfach 1153 32609 Hüllhorst Deutschland</div>
              <div class="addr">Lorenz &amp; Partner GmbH<br />Bahnhofstr. 60<br />71437 Ludwigsburg</div>
              <div class="inv">
                <div><h2>Rechnung Nr. DR9121852</h2><i>Bitte bei Zahlung angeben</i></div>
                <div><div class="code"></div>DR</div>
              </div>
              <div class="meta">
                <span>Rech. an Deb.-Nr.</span><span>39737</span><span>Zu</span>
                <span>Auftragsnr.</span><span>DB8184808</span><span></span>
                <span>Belegdatum</span><span>16.01.2026</span><span></span>
              </div>
              <div class="items">
                <span class="h first">Menge</span><span class="h">Beschreibung</span>
                <span class="rule"></span>
                <span class="q">8 Stück</span><span>TERRA PC-BUSINESS 6000</span>
                <span class="sub in">Bring-In-Service 24 Mon.</span>
                <span class="sub in"><span class="mf">Hersteller</span>1000127 (WORTMANN AG)</span>
                <span class="sub">• Core i5-12600 (max. 4.8 GHz), Mini-Tower PC312</span>
                <span class="sub">• Windows 11 Pro, Microsoft Office trial</span>
                <span class="sub">• 16 GB DDR5-RAM, 500 GB M.2-SSD PCIe, DVD-Brenner, GbE-</span>
                <span class="sub">• Intel UHD Grafik 770 (2x DP, 1x HDMI, 1x VGA)</span>
                <span class="sub">unterstützt bis zu 4x Displays</span>
                <span class="sub">• Tastatur, Wheel Maus optical</span>
                <span class="q">1 Stück</span><span>Mautpauschale</span>
                <span class="q">1 Stück</span><span>Transportversicherung 0,27%</span>
                <span class="q gap">1 Stück</span><span class="gap">Frachtkosten</span>
              </div>
              <div class="pay">Zahlbar: 30 Tage</div>
              <div class="deliv">Enthaltene Lieferungen (Lieferdatum)</div>
              <div class="dl">DL7576885 (16.01.2026)</div>
              <div class="imprint">
                <div>Amtsgericht: Bad Oeynhausen<br />HRB 7371, Sitz Hüllhorst<br />USt.-Id.-Nr.: DE125753836<br />UID-Nr. Schweiz: CHE-113.666.730 MWST<br />Steuernummer: 331/5896/0362<br />WEEE-Reg.-Nr.: DE 367 235 92<br />United Kingdom VAT: GB376387890</div>
                <div>Bredenhop 20<br />32609 Hüllhorst, Germany<br />PHONE: +49 5744 944-0<br />Fax: +49 5744 944-444<br />E-mail: info@wortmann.de<br />www.wortmann.de</div>
                <div>Vorstandsvorsitze<br /><b>Siegbert Wortmann</b><br />Aufsichtsratsvorsi<br /><b>Thomas Knicker</b><br /><br /><b>Zertifiziert nach D</b><br /><b>Zertifiziert nach D</b></div>
              </div>
            </div>
            <div class="paper next"></div>
          </article>
          <div class="vs"><svg class="ic" width="7" height="5"><path d="M0 4L3.500 0 7 4z" fill="#555" /></svg><i></i><svg class="ic" width="7" height="5"><path d="M0 0h7L3.500 4z" fill="#555" /></svg></div>
          <div class="hs2"><svg class="ic" width="5" height="7"><path d="M4 0L0 3.500 4 7z" fill="#555" /></svg><i></i><svg class="ic" width="5" height="7"><path d="M0 0l4 3.500L0 7z" fill="#555" /></svg></div>
          <div class="corner"></div>
        </div>
      </main>
      <footer class="cap">Dokumentenvorschau</footer>
    `;
  }
}

/* ---------- main application ---------- */

const MOSAIC: [string, number][] = [
  ["#ccc4c0", 18], ["#dbd2c6", 17], ["#f0f0e8", 18], ["#fbfbfb", 18], ["#c8c0c0", 17], ["#cfcfda", 13], ["#d9d4d0", 11], ["#e8e6e8", 13],
  ["#e7ebe7", 17], ["#e6e0dc", 18], ["#d2c7c7", 17], ["#c2bbc5", 18], ["#dcc8c0", 6], ["#f0e6e1", 12], ["#dce3f1", 17], ["#d6d5cc", 14],
];

const QUICK = ["bino", "personPencil", "docPrint", "docEye", "clock", "word", "noteAdd", "noteMail", "post", "calc", "tableHelp", "lens", "help", "bulb", "remote", "disc"];

const JOURNAL: { h: string; v: string; w?: number; a?: string; ha?: string }[] = [
  { h: "", v: "", w: 20 },
  { h: "Nr", v: "1", w: 40 },
  { h: "Herkunft", v: "Belegmanagement  [Div", w: 120, a: "l" },
  { h: "Dokumentenlink", v: "smartconnect://document?receiptid=0265fc29-df71", w: 250, a: "l" },
  { h: "B-SL", v: "", w: 32 },
  { h: "Datum", v: "20.01.2026", w: 65 },
  { h: "Belegnummer 1", v: "7220525288", w: 93 },
  { h: "Konto", v: "70000", w: 90 },
  { h: "Gegenkonto", v: "6805", w: 80 },
  { h: "Betrag", v: "109,87 H", w: 90 },
  { h: "Kontrollsumme", v: "-109,87", w: 119 },
  { h: "St-SL", v: "9", w: 32 },
  { h: "Skonto", v: "", w: 90 },
  { h: "Belegnummer 2", v: "", w: 93 },
  { h: "Buchungstext", v: "Telefon", a: "l", ha: "r" },
];

@customElement("app-root")
export class AppRoot extends LitElement {
  @property({ type: String }) user = "ANGERMANN";

  static styles = [
    base,
    css`
      :host { display: block; --ui: "Noto Sans", "Open Sans", sans-serif; --form: "Liberation Sans", sans-serif; }
      .screen { position: relative; height: 100vh; display: grid; grid-template-columns: minmax(0, 1fr) 480px; grid-template-rows: minmax(0, 1fr); border: 1px solid #000; overflow: hidden; background: #fff; }
      .app { display: flex; flex-direction: column; min-width: 0; min-height: 0; font: 11px/13px var(--ui); color: #333; }
      receipts-dialog { position: absolute; left: 687px; top: 213px; width: 885px; height: 395px; }

      .head { display: grid; grid-template-columns: 50px minmax(0, 1fr); background: #f0f0f0; flex: none; }
      .head .orb { grid-row: 1 / 3; padding: 5px 0 0 4px; border-bottom: 1px solid #c3c3c3; }
      .quick { height: 27px; display: flex; align-items: center; padding-left: 3px; }
      .quick .new { margin-right: 4px; width: 16px; }
      .client { display: flex; align-items: center; width: 300px; height: 23px; border: 1px solid #8c8c8c; background: #fff; color: #000; padding-left: 4px; }
      .client input { width: 51px; border: 0; padding: 0; background: none; height: 16px; }
      .mos { display: flex; }
      .mos i { height: 15px; }
      .q { width: 23px; height: 24px; display: grid; place-items: center; }
      .wtitle { flex: 1; text-align: center; color: #a5a5a5; white-space: nowrap; padding: 0 0 3px 14px; }
      .wbs { display: flex; gap: 20px; padding: 3px 10px 0 0; }
      .tabs { height: 26px; display: flex; }
      .tab { display: flex; align-items: center; gap: 3px; border-bottom: 1px solid #c3c3c3; padding-top: 2px; color: #444; }
      .tab.t1 { width: 95px; padding-left: 14px; }
      .tab.act { width: 136px; padding-left: 11px; padding-top: 0; background: #fafafa; color: #1277c4; border: 1px solid #c3c3c3; border-top: 2px solid #0a78c8; border-bottom: 0; }
      .tab.t3 { padding-left: 13px; width: 92px; }
      .tab.t4 { width: 91px; }
      .tab.t5 { width: 90px; }
      .tabs .rest { flex: 1; border-bottom: 1px solid #c3c3c3; display: flex; justify-content: flex-end; align-items: center; gap: 7px; padding-right: 4px; white-space: nowrap; }
      .tabs .rest button { flex: none; }
      .tabs .rest .who { display: flex; align-items: center; gap: 4px; width: 94px; }

      .ribbon { height: 95px; flex: none; display: flex; background: #fafafa; border-bottom: 1px solid #c3c3c3; }
      .rg { display: flex; flex-direction: column; justify-content: space-between; padding-bottom: 5px; border: 0; color: #444; }
      .rs { width: 1px; background: #c8c8c8; margin: 6px 0 7px; flex: none; }
      .gl { text-align: center; color: #7c7c7c; line-height: 14px; }
      .bigs { display: flex; justify-content: center; gap: 16px; padding-top: 12px; }
      .big { display: flex; flex-direction: column; align-items: center; white-space: nowrap; }
      .big .ic { margin-bottom: 9px; }
      .big .dn { margin: 10px 0 0; }
      .ln2 { display: flex; align-items: center; gap: 3px; }
      .ln2 .dn { margin: 0; }
      .off { color: #b4b4b4; }
      .smalls { display: grid; grid-template-columns: auto auto; grid-auto-flow: column; padding-top: 4px; justify-content: start; }
      .smalls.r3 { grid-template-rows: 23px 23px 23px; padding-left: 10px; grid-template-columns: 120px auto; }
      .smalls.r2 { grid-template-rows: 23px 23px; padding-left: 9px; }
      .sm { display: flex; align-items: center; gap: 3px; white-space: nowrap; }
      .sm .dn { margin: 0; }

      .work { flex: 1; min-height: 0; display: grid; grid-template-columns: 27px minmax(0, 1fr); grid-template-rows: minmax(0, 1fr); }
      .side { background: #e3e3e3; display: flex; flex-direction: column; align-items: center; padding-top: 2px; color: #555; }
      .side a { display: flex; flex-direction: column; align-items: center; gap: 4px; }
      .side span { writing-mode: vertical-rl; line-height: 16px; }
      .side a.s2 { margin-top: 20px; }
      .side a.s3 { margin-top: 12px; }
      .main { display: flex; flex-direction: column; min-width: 0; min-height: 0; }
      .docs { height: 35px; flex: none; display: flex; align-items: flex-end; background: #fff; }
      .doc { width: 135px; height: 25px; margin-left: 1px; display: flex; align-items: center; gap: 3px; padding: 0 0 1px 8px; color: #1277c4; border: 1px solid #c3c3c3; border-top: 2px solid #0a78c8; border-bottom: 0; white-space: nowrap; }
      .docs .r { flex: 1; height: 35px; border-bottom: 1px solid #c3c3c3; display: flex; justify-content: flex-end; align-items: center; gap: 10px; padding-right: 2px; }
      .tools { height: 34px; flex: none; display: flex; align-items: center; background: #fafafa; margin-left: 2px; padding: 0 4px 2px 1px; border-top: 1px solid #ddd; }
      .tb { width: 30px; height: 30px; display: grid; place-items: center; flex: none; }
      .tb.on { background: #aed6f1; }
      .ts { width: 1px; height: 30px; background: #ddd; margin: 0 2px 0 3px; flex: none; }
      .combo { position: relative; display: flex; align-items: center; border: 1px solid #999; background: #fff; height: 23px; flex: none; color: #000; }
      .combo select { appearance: none; border: 0; background: none; width: 100%; height: 21px; line-height: 17px; padding: 0 3px; }
      .combo .dn { position: absolute; right: 5px; top: 9px; pointer-events: none; }
      .haufe { margin-left: auto; width: 149px; height: 23px; border: 1px solid #999; background: #fff; padding: 0 4px; margin-right: 4px; }
      .haufe::placeholder { color: #8f8f8f; opacity: 1; }

      .form { flex: 1; min-height: 0; display: flex; flex-direction: column; margin-left: 2px; border-left: 1px solid #7a7a7a; background: #d4d4d4; font: 11px/14px var(--form); color: #111; }
      .band { display: flex; align-items: center; background: #e8e8e8; border-top: 1px solid #7a7a7a; border-bottom: 1px solid #7a7a7a; flex: none; }
      .band.stackrow { height: 36px; padding: 0 0 3px 6px; }
      .stackrow label { width: 80px; white-space: nowrap; flex: none; }
      .stackrow label.no { width: 40px; margin: 0 2px 0 183px; }
      .stackrow .name { margin: 0 4px 0 6px; }
      .f { height: 18px; border: 1px solid #6f6f6f; background: #fff; padding: 0 2px; flex: none; text-align: right; }
      .f.ro { background: #ebebeb; }
      .f.lt { text-align: left; }
      .f.pale { border-color: #bdbdbd; background: #e6e6e6; }
      .f.tall { height: 20px; }
      .bb { width: 20px; height: 20px; border: 1px solid #aaa; background: #e2e2e2; display: grid; place-items: center; flex: none; }
      .bb .ic { width: 14px; height: 14px; }
      .pb { height: 20px; border: 1px solid #a5a5a5; background: #e0e0e0; flex: none; }
      .entry { height: 270px; flex: none; display: grid; grid-template-columns: 264px minmax(0, 1fr); padding-top: 5px; }
      .row { height: 22px; display: flex; align-items: center; }
      .row > label { width: 111px; text-align: right; margin-right: 5px; flex: none; white-space: nowrap; }
      .row > label.short { width: 51px; margin-right: 7px; }
      .row .f + .bb, .row .f + .pb, .row .bb + .f.code { margin-left: 4px; }
      .row .bb + .f { margin-left: 3px; }
      .row .f + .f { margin-left: 4px; }
      .right { padding-top: 117px; }
      .party { width: 420px; height: 57px; border: 1px solid #8e8e8e; background: #f0f0f0; }
      .party th { height: 19px; background: #fff; text-align: left; padding: 0 2px; border-right: 1px solid #ccc; border-bottom: 1px solid #a8a8a8; }
      .party td { height: 16px; padding: 0 3px; border-right: 1px solid #ccc; line-height: 13px; }
      .party td.n { text-align: right; }
      .right .row { margin-top: 4px; }
      .right .row > label { width: 39px; }
      .right .row > label.due { width: 90px; margin-right: 7px; }
      .right .row.look { height: 20px; padding-left: 298px; margin-top: 0; }
      .right .row.txt { height: 34px; align-items: stretch; margin-top: 4px; }
      .row.txt label { padding-top: 2px; }
      .memo { width: 274px; display: flex; border: 1px solid #6f6f6f; background: #fff; }
      .memo textarea { flex: 1; border: 0; resize: none; padding: 1px 2px; height: 32px; background: none; }
      .memo .vsb { width: 17px; background: #f0f0f0; display: flex; flex-direction: column; justify-content: space-between; align-items: center; padding: 6px 0; }
      .row.txt .pb { width: 72px; margin: 2px 0 0 4px; }
      .band.sum { height: 32px; }
      .band.sum label:first-child { width: 110px; text-align: right; margin-right: 4px; }
      .band.sum label.sp { margin: 0 4px 0 44px; }
      .strip { height: 25px; flex: none; display: flex; align-items: center; padding: 3px 0 0 4px; }
      .strip .pb { width: 149px; height: 20px; }
      .strip label { width: 51px; text-align: right; margin-right: 6px; }
      .strip .bb { margin-left: 5px; }
      .bal { width: 665px; height: 39px; flex: none; margin-left: 1px; border: 1px solid #8e8e8e; background: #fff; }
      .bal th, .jr th { height: 19px; text-align: center; border-right: 1px solid #ccc; border-bottom: 1px solid #a8a8a8; }
      .bal td { height: 16px; line-height: 13px; text-align: right; padding: 0 3px; border-right: 1px solid #ccc; }
      .bal td:first-child { text-align: left; padding-left: 2px; }
      .jr { flex: 1; min-height: 0; margin: 2px 3px 3px 1px; border: 1px solid #8e8e8e; background: #fff; display: grid; grid-template-columns: minmax(0, 1fr) 17px; grid-template-rows: minmax(0, 1fr) 17px; }
      .jr table { align-self: start; }
      .jr td { height: 16px; background: #cde5f7; text-align: right; padding: 0 3px; border-right: 1px solid #c5cdd3; border-bottom: 1px solid #e8e8e8; line-height: 14px; white-space: pre; }
      .jr td.l { text-align: left; padding: 0 2px; }
      .jr th.r { text-align: right; padding-right: 9px; }
      .jr th:last-child, .jr td:last-child { border-right: 0; }
      .jvs { background: #f0f0f0; display: flex; flex-direction: column; align-items: center; padding: 5px 0; }
      .jvs i { width: 15px; height: 17px; background: #cdcdcd; margin: 3px 0 auto; }
      .jhs { grid-column: 1 / 3; background: #f0f0f0; display: flex; align-items: center; padding: 0 23px 0 4px; }
      .jhs i { width: 17px; height: 15px; background: #cdcdcd; margin: 0 auto 0 6px; }
    `,
  ];

  private dn() {
    return html`<svg class="ic dn" width="6" height="4" viewBox="0 0 6 4"><path d="M0 0h6L3 3.500z" fill="#777" /></svg>`;
  }
  private chev(d: string, c = "#666") {
    return html`<svg class="ic" width="8" height="8" viewBox="0 0 8 8"><path d=${d} fill="none" stroke=${c} stroke-width="1.800" /></svg>`;
  }
  private field(id: string, w: number, value = "", cls = "") {
    return html`<input id=${id} class="f ${cls}" style="width:${w}px" .value=${value} ?readonly=${cls.includes("ro") || cls.includes("pale")} />`;
  }
  private info(label: string, w: number, value = "", cls = "") {
    return html`<input class="f ro ${cls}" aria-label=${label} style="width:${w}px" .value=${value} readonly />`;
  }
  private look(label: string) {
    return html`<button class="bb" aria-label="${label} suchen">${icon("bino")}</button>`;
  }
  private tools(names: string[]) {
    return names.map((n) => html`<button class="tb ${n === "stack" ? "on" : ""}" aria-label=${n}>${icon(n)}</button>`);
  }
  private big(ic: string, label: string, second?: unknown, off = false) {
    return html`<button class="big ${off ? "off" : ""}">${icon(ic)}<span>${label}</span>${second ?? this.dn()}</button>`;
  }
  private small(ic: string, label: string, more = false, off = false) {
    return html`<button class="sm ${off ? "off" : ""}">${icon(ic)}${label}${more ? this.dn() : nothing}</button>`;
  }
  private group(w: number, label: string, body: unknown) {
    return html`<section class="rg" style="width:${w}px">${body}<div class="gl">${label}</div></section><div class="rs"></div>`;
  }

  private header() {
    return html`
      <header class="head">
        <div class="orb">${icon("logo")}</div>
        <div class="quick">
          <button class="new" aria-label="Neu">${icon("newDoc")}</button>
          <div class="client">
            <input aria-label="Mandant" value="Mandant" />
            <div class="mos">${MOSAIC.map(([c, w]) => html`<i style="width:${w}px;background:${c}"></i>`)}</div>
          </div>
          ${QUICK.map((q) => html`<button class="q" aria-label=${q}>${icon(q)}</button>`)}
          <div class="wtitle">3400030 cs Test Bankabstimmung hybrides Buchen - ADDISON - Buchen im Dialog</div>
          <div class="wbs">
            <svg class="ic" width="9" height="10"><path d="M0 7h9" stroke="#b5b5b5" stroke-width="2" /></svg>
            <svg class="ic" width="9" height="10"><rect x="0.500" y="1" width="8" height="8.500" fill="none" stroke="#b5b5b5" /><path d="M0 1.500h9" stroke="#b5b5b5" stroke-width="2" /></svg>
            <svg class="ic" width="9" height="10"><path d="M0 0.500l9 9M9 .5l-9 9" stroke="#b5b5b5" stroke-width="1.800" /></svg>
          </div>
        </div>
        <nav class="tabs">
          <a class="tab t1" href="#mandant">${icon("docPerson")}Mandant</a>
          <a class="tab act" href="#rw">${icon("ledger")}Rechnungswesen</a>
          <a class="tab t3" href="#online">${icon("globeAt")}Online</a>
          <a class="tab t4" href="#erweitert">${icon("gear")}Erweitert</a>
          <a class="tab t5" href="#beratung">${icon("advice")}Beratung</a>
          <div class="rest">
            <button aria-label="Online">${icon("globeAt")}</button>
            <button aria-label="Assistent">${icon("spark")}</button>
            <button aria-label="Hilfe">${icon("helpSolid", 15)}</button>
            <button class="who">${icon("globeUser")}${this.user}</button>
          </div>
        </nav>
      </header>
    `;
  }

  private ribbon() {
    return html`
      <div class="ribbon">
        ${this.group(81, "Vorgänge", html`<div class="bigs">${this.big("edit", "Bearbeiten")}</div>`)}
        ${this.group(114, "Wirtschaftsjahr", html`<div class="bigs">${this.big("fiscal", "01.2026 - 12.2026", html`<span class="ln2">08.2026${this.dn()}</span>`)}</div>`)}
        ${this.group(96, "Erfassung", html`<div class="smalls r2">${this.small("writeOff", "Buchen", false, true)}${this.small("windows", "weitere", true)}</div>`)}
        ${this.group(225, "Infos", html`<div class="smalls r3">
          ${this.small("acct", "Kontenblatt/OP")}${this.small("saldo", "Salden")}${this.small("saldo", "Kunde/Lieferant")}
          ${this.small("bwa", "BWA")}${this.small("bilanz", "Bilanz/EÜR")}${this.small("windows", "weitere", true)}</div>`)}
        ${this.group(197, "Verarbeitung", html`<div class="bigs">${this.big("op", "OP-Verwaltung")}${this.big("reports", "Auswertungen")}</div>`)}
        ${this.group(94, "Stammdaten", html`<div class="bigs">${this.big("master", "Stammdaten")}</div>`)}
        ${this.group(62, "Extras", html`<div class="bigs">${this.big("tools", "Extras")}</div>`)}
        ${this.group(160, "REB", html`<div class="bigs">${this.big("inbox", "Rechnungseingangsbuch", html``, true)}</div>`)}
        ${this.group(129, "Status", html`<div class="bigs">${this.big("status", "Fibu", html`<span>Verarbeitungsstatus</span>`)}</div>`)}
      </div>
    `;
  }

  private toolbar() {
    const sep = html`<span class="ts"></span>`;
    return html`
      <div class="tools" role="toolbar">
        ${this.tools(["collapse", "newDocL", "printL", "trash"])}${sep}
        ${this.tools(["first", "prev", "next", "last"])}${sep}${this.tools(["funnel"])}
        <div class="combo" style="width:151px"><select aria-label="Filter"><option></option></select>${this.dn()}</div>
        ${this.tools(["funnelTools"])}${sep}${this.tools(["scanner", "stack", "attach", "pageArrow", "pageLoop", "lensL"])}${sep}
        ${this.tools(["truck"])}${sep}${this.tools(["copyAdd", "checklist", "listPen", "note", "listTools", "drumCopy", "cards"])}${sep}
        ${this.tools(["abc"])}${sep}
        <div class="combo" style="width:199px"><select aria-label="Buchungskreis"><option>Kreis 0: Standardbuchungskreis</option></select>${this.dn()}</div>
        ${sep}<button class="tb" aria-label="Hilfe">${icon("help", 24)}</button>
        <input class="haufe" aria-label="Haufe" placeholder="in Haufe Online suchen" />
        <button aria-label="Haufe Info">${icon("haufe")}</button>
      </div>
    `;
  }

  private entry() {
    return html`
      <div class="band stackrow">
        <label for="stapel">Buchungsstapel</label>${this.field("stapel", 64, "1.2026", "ro tall")}
        ${this.info("Stapelname", 202, "Buchungen aus Belegmanagement", "lt tall name")}${this.look("Stapel")}
        <label class="no" for="nummer">Nummer</label>${this.field("nummer", 49, "2", "ro tall")}
      </div>
      <div class="entry">
        <div>
          <div class="row"><label for="art">Buchungs<u>a</u>rt</label>${this.field("art", 33)}${this.look("Buchungsart")}${this.info("Art", 32, "", "code")}</div>
          <div class="row"><label for="schl">Bu<u>c</u>hungsschlüssel</label>${this.field("schl", 33)}${this.look("Schlüssel")}</div>
          <div class="row"><label for="dat"><u>D</u>atum</label>${this.field("dat", 64, "16.01.2026")}<button class="pb" style="width:19px">L</button></div>
          <div class="row"><label for="ldat"><u>L</u>eistungsdatum</label>${this.field("ldat", 64)}</div>
          <div class="row"><label for="b1">Belegnummer <u>1</u></label>${this.field("b1", 99, "DR9121852")}</div>
          <div class="row"><label for="b2">Belegnummer <u>2</u></label>${this.field("b2", 99)}</div>
          <div class="row"><label for="kto"><u>K</u>onto</label>${this.field("kto", 99, "70006")}${this.look("Konto")}</div>
          <div class="row"><label for="gkto"><u>G</u>egenkonto</label>${this.field("gkto", 99, "6495")}${this.look("Gegenkonto")}</div>
          <div class="row"><label for="betrag">Betrag</label>${this.field("betrag", 99, "-5.719,07")}</div>
          <div class="row">
            <label class="short" for="stsl"><u>S</u>t.-Sl.</label>${this.field("stsl", 33, "9")}${this.look("Steuerschlüssel")}${this.info("Steuerbetrag", 99, "913,13")}${this.info("Steuerart", 27, "V", "lt")}
          </div>
          <div class="row"><label></label>${this.info("Steuersatz", 99, "19,00")}</div>
        </div>
        <div class="right">
          <div class="party">
            <table>
              <colgroup><col style="width:221px" /><col style="width:89px" /><col /></colgroup>
              <thead><tr><th scope="col">Bezeichnung</th><th scope="col">Saldo</th><th scope="col">USt-Identnummer</th></tr></thead>
              <tbody>
                <tr><td>Wortmann AG</td><td class="n">0,00 S</td><td>DE125753836</td></tr>
                <tr><td>Wartungskosten für Hard- u. Softw.</td><td class="n">0,00 S</td><td></td></tr>
              </tbody>
            </table>
          </div>
          <div class="row"><label for="skonto">Skonto</label>${this.field("skonto", 114, "", "pale")}<label class="due" for="due"><u>F</u>älligkeit</label>${this.field("due", 64, "15.02.2026")}</div>
          <div class="row look">${this.look("Fälligkeit")}</div>
          <div class="row txt">
            <label for="text"><u>T</u>ext</label>
            <div class="memo"><textarea id="text"></textarea><div class="vsb">${this.chev("M1 6l3-4 3 4", "#bbb")}${this.chev("M1 2l3 4 3-4", "#bbb")}</div></div>
            <button class="pb">Buchen</button>
          </div>
        </div>
      </div>
      <div class="band sum">
        <label for="ks">Kontrollsumme</label>${this.field("ks", 106, "-109,87")}
        <label class="sp" for="auft">Aufteilung</label>${this.field("auft", 106, "", "ro")}
      </div>
      <div class="strip">
        <button class="pb">Buchungsjournal</button><label for="jk">Konto</label>${this.field("jk", 101)}${this.look("Konto")}
      </div>
    `;
  }

  private tables() {
    return html`
      <div class="bal">
        <table>
          <colgroup><col style="width:243px" /><col /><col /><col /><col /></colgroup>
          <thead><tr><th scope="col"></th><th scope="col">AB</th><th scope="col">Soll</th><th scope="col">Haben</th><th scope="col">Saldo</th></tr></thead>
          <tbody><tr><td>Wortmann AG</td><td>0,00</td><td>0,00</td><td>0,00</td><td>0,00 S</td></tr></tbody>
        </table>
      </div>
      <div class="jr">
        <table>
          <colgroup>${JOURNAL.map((c) => html`<col style=${c.w ? `width:${c.w}px` : ""} />`)}</colgroup>
          <thead><tr>${JOURNAL.map((c) => html`<th scope="col" class=${c.ha ?? ""}>${c.h}</th>`)}</tr></thead>
          <tbody><tr>${JOURNAL.map((c) => html`<td class=${c.a ?? ""}>${c.v}</td>`)}</tr></tbody>
        </table>
        <div class="jvs">${this.chev("M1 6l3-4 3 4")}<i></i>${this.chev("M1 2l3 4 3-4")}</div>
        <div class="jhs">${this.chev("M6 1L2 4l4 3")}<i></i>${this.chev("M2 1l4 3-4 3")}</div>
      </div>
    `;
  }

  render() {
    return html`
      <div class="screen">
        <div class="app">
          ${this.header()}${this.ribbon()}
          <div class="work">
            <nav class="side">
              <a href="#open" aria-label="Öffnen">${icon("enter")}</a>
              <a class="s2" href="#akte">${icon("book")}<span>Akte</span></a>
              <a class="s3" href="#bearbeitung">${icon("worksheet")}<span>Bearbeitung</span></a>
            </nav>
            <main class="main">
              <div class="docs">
                <a class="doc" href="#buchen">${icon("ledger")}Buchen im Dialog</a>
                <div class="r">
                  <svg class="ic" width="5" height="8"><path d="M4 1L1 4l3 3z" fill="#fff" stroke="#999" /></svg>
                  <svg class="ic" width="5" height="8"><path d="M1 1l3 3-3 3z" fill="#fff" stroke="#999" /></svg>
                  <svg class="ic" width="12" height="12"><path d="M0 .5h12M2 4.500h8L6 11z" fill="#666" stroke="#666" /></svg>
                  <svg class="ic" width="9" height="9"><path d="M0 0l9 9M9 0L0 9" stroke="#666" /></svg>
                </div>
              </div>
              ${this.toolbar()}
              <div class="form">${this.entry()}${this.tables()}</div>
            </main>
          </div>
        </div>
        <document-viewer></document-viewer>
        <receipts-dialog></receipts-dialog>
      </div>
    `;
  }
}
